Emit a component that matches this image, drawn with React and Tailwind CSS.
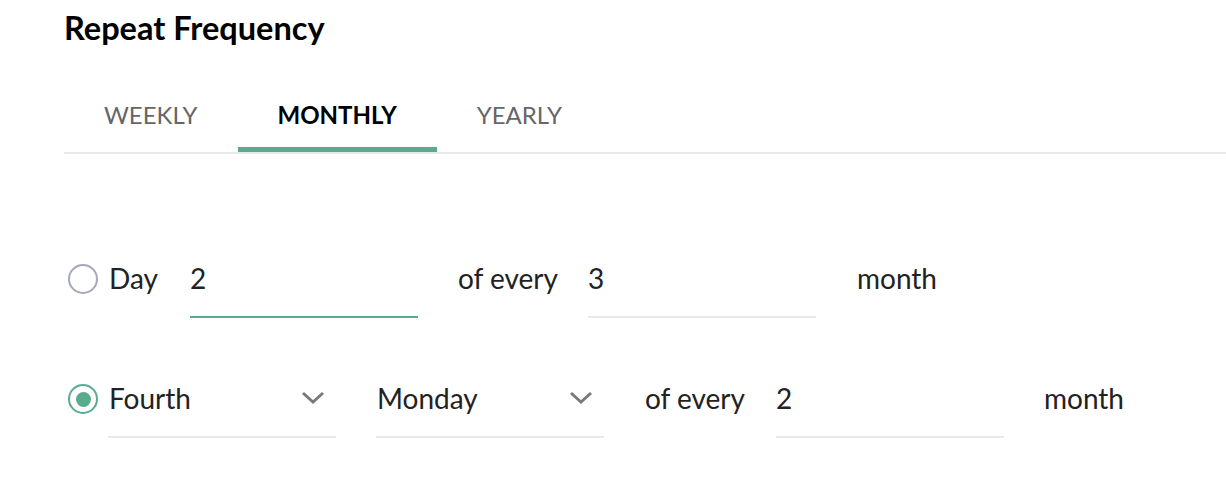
import React, { useState } from 'react';

const Chevron = () => (
  <svg width="24" height="14" viewBox="0 0 24 14" fill="none" className="shrink-0">
    <polyline points="2,2 12,11 22,2" stroke="#7a7a7a" strokeWidth="3" />
  </svg>
);

const Radio = ({ checked, onClick }) => (
  <button
    onClick={onClick}
    className={`ml-[4px] w-[30px] h-[30px] rounded-full flex items-center justify-center shrink-0 border-2 ${
      checked ? 'border-[#5aab8e]' : 'border-[#a3a8ba]'
    }`}
  >
    {checked && <span className="w-[15px] h-[15px] rounded-full bg-[#5aab8e]" />}
  </button>
);

const tabs = ['WEEKLY', 'MONTHLY', 'YEARLY'];

const App = () => {
  const [tab, setTab] = useState('MONTHLY');
  const [mode, setMode] = useState('nth');

  return (
    <div className="w-[1226px] h-[484px] bg-white pl-[64px] text-[#222] font-['Lato',sans-serif] overflow-hidden">
      <h1 className="pt-[8px] text-[32.5px] font-bold leading-[40px] text-black">Repeat Frequency</h1>

      <div className="mt-[34px] flex border-b-2 border-[#e8e8e8]">
        {tabs.map((t) => (
          <button
            key={t}
            onClick={() => setTab(t)}
            className={`h-[70px] px-[40px] border-b-[5px] text-[24px] ${
              tab === t ? 'border-[#5aab8e] font-bold text-black' : 'border-transparent text-[#666]'
            }`}
          >
            {t}
          </button>
        ))}
      </div>

      <div className="mt-[86px] flex flex-col gap-[42px] text-[28px]">
        <div className="flex items-center">
          <Radio checked={mode === 'day'} onClick={() => setMode('day')} />
          <span className="ml-[11px] w-[81px] -mt-[2px]">Day</span>
          <div className="w-[228px] h-[78px] flex items-center border-b-2 border-[#5aab8e]">2</div>
          <span className="ml-[40px] w-[130px] -mt-[2px]">of every</span>
          <div className="w-[228px] h-[78px] flex items-center border-b-2 border-[#e8e8e8]">3</div>
          <span className="ml-[41px] -mt-[2px]">month</span>
        </div>

        <div className="flex items-center">
          <Radio checked={mode === 'nth'} onClick={() => setMode('nth')} />
          <div className="ml-[10px] w-[228px] h-[78px] flex items-center justify-between pr-[11px] border-b-2 border-[#e8e8e8]">
            <span className="pl-[1px]">Fourth</span>
            <Chevron />
          </div>
          <div className="ml-[40px] w-[228px] h-[78px] flex items-center justify-between pr-[11px] border-b-2 border-[#e8e8e8]">
            <span className="pl-[1px]">Monday</span>
            <Chevron />
          </div>
          <span className="ml-[41px] w-[131px] -mt-[2px]">of every</span>
          <div className="w-[228px] h-[78px] flex items-center border-b-2 border-[#e8e8e8]">2</div>
          <span className="ml-[40px] -mt-[2px]">month</span>
        </div>
      </div>
    </div>
  );
};

export default App;
